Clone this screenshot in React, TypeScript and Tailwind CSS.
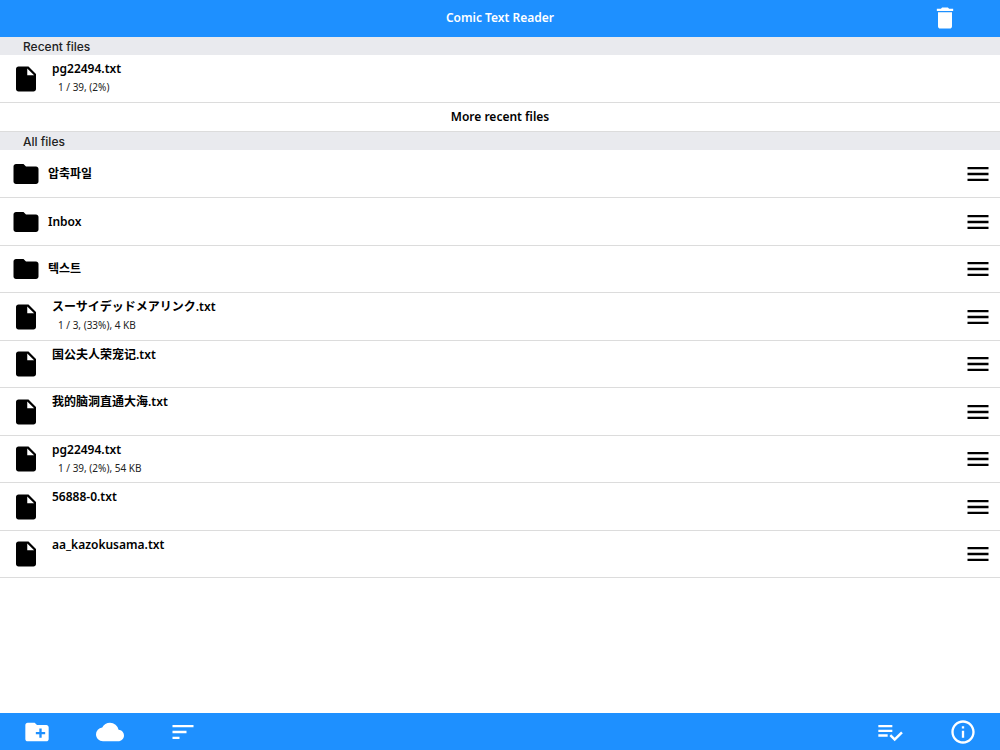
import {
  MdCloud,
  MdCreateNewFolder,
  MdDelete,
  MdFolder,
  MdInfoOutline,
  MdInsertDriveFile,
  MdMenu,
  MdSort,
} from 'react-icons/md'

type Entry = {
  name: string
  kind: 'folder' | 'file'
  detail?: string
}

const recentFiles: Entry[] = [{ name: 'pg22494.txt', kind: 'file', detail: '1 / 39, (2%)' }]

const allFiles: Entry[] = [
  { name: '압축파일', kind: 'folder' },
  { name: 'Inbox', kind: 'folder' },
  { name: '텍스트', kind: 'folder' },
  { name: 'スーサイデッドメアリンク.txt', kind: 'file', detail: '1 / 3, (33%), 4 KB' },
  { name: '国公夫人荣宠记.txt', kind: 'file' },
  { name: '我的脑洞直通大海.txt', kind: 'file' },
  { name: 'pg22494.txt', kind: 'file', detail: '1 / 39, (2%), 54 KB' },
  { name: '56888-0.txt', kind: 'file' },
  { name: 'aa_kazokusama.txt', kind: 'file' },
]

function PlaylistCheckIcon() {
  return (
    <svg viewBox="0 0 24 24" fill="currentColor" className="size-7">
      <path d="M14 10H2v2h12v-2zm0-4H2v2h12V6zM2 16h8v-2H2v2zm19.5-4.5L23 13l-6.99 7-4.51-4.5L13 14l3.01 3 5.49-5.5z" />
    </svg>
  )
}

function SectionTitle({ children }: { children: string }) {
  return (
    <h2 className="h-[18px] bg-[#e9eaee] pl-[23px] font-['Inter','Liberation_Sans',sans-serif] text-[12px] leading-5 font-medium text-[#222]">
      {children}
    </h2>
  )
}

function Row({ entry, sortable }: { entry: Entry; sortable?: boolean }) {
  const isFolder = entry.kind === 'folder'

  return (
    <li className="flex h-12 border-b border-[#dcdcdc] nth-[2n+3]:h-[47px]">
      <a href="#" className="flex min-w-0 flex-1 pl-[11px]">
        {isFolder ? (
          <MdFolder className="size-[30px] shrink-0 self-center" />
        ) : (
          <MdInsertDriveFile className="size-[30px] shrink-0 self-center" />
        )}
        {isFolder ? (
          <span className="self-center pl-[7px] text-[12px] leading-4 font-semibold">{entry.name}</span>
        ) : (
          <span className="flex flex-col gap-0.5 pt-1.5 pl-[11px]">
            <span className="text-[12px] leading-4 font-semibold">{entry.name}</span>
            {entry.detail && <span className="pl-[6px] text-[10px] leading-4 text-[#222]">{entry.detail}</span>}
          </span>
        )}
      </a>
      {sortable && (
        <button aria-label={`Reorder ${entry.name}`} className="shrink-0 pr-2">
          <MdMenu className="size-7" />
        </button>
      )}
    </li>
  )
}

export default function App() {
  return (
    <div className="flex min-h-screen flex-col bg-white font-['Noto_Sans','Noto_Sans_CJK_SC',sans-serif] text-black">
      {/* Title bar */}
      <header className="grid h-[37px] grid-cols-[1fr_auto_1fr] items-center bg-[#1e90ff] pb-0.5 text-white">
        <h1 className="col-start-2 text-[12px] leading-4 font-semibold">Comic Text Reader</h1>
        <button aria-label="Delete" className="mr-[41px] justify-self-end">
          <MdDelete className="size-7" />
        </button>
      </header>

      <main className="flex-1">
        {/* Recent files */}
        <section>
          <SectionTitle>Recent files</SectionTitle>
          <ul>
            {recentFiles.map((entry) => (
              <Row key={entry.name} entry={entry} />
            ))}
          </ul>
          <button className="block h-[29px] w-full border-b border-[#dcdcdc] text-[12px] leading-4 font-semibold">
            More recent files
          </button>
        </section>

        {/* All files */}
        <section>
          <SectionTitle>All files</SectionTitle>
          <ul>
            {allFiles.map((entry) => (
              <Row key={entry.name} entry={entry} sortable />
            ))}
          </ul>
        </section>
      </main>

      {/* Toolbar */}
      <footer className="flex h-[37px] items-center justify-between bg-[#1e90ff] px-[23px] text-white">
        <div className="flex gap-[45px]">
          <button aria-label="New folder">
            <MdCreateNewFolder className="size-7" />
          </button>
          <button aria-label="Cloud">
            <MdCloud className="size-7" />
          </button>
          <button aria-label="Sort">
            <MdSort className="size-7" />
          </button>
        </div>
        <div className="flex gap-[45px]">
          <button aria-label="Select files">
            <PlaylistCheckIcon />
          </button>
          <button aria-label="Information">
            <MdInfoOutline className="size-7" />
          </button>
        </div>
      </footer>
    </div>
  )
}
